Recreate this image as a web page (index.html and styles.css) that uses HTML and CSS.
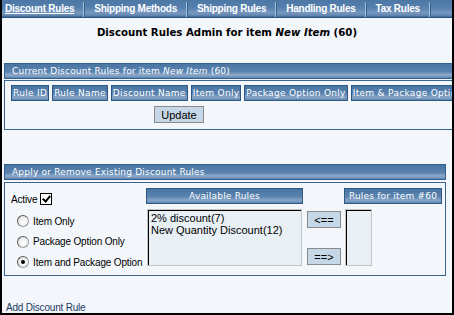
FILE: index.html
```html
<!DOCTYPE html>
<html lang="en">
<head>
    <meta charset="UTF-8">
    <title>Discount Rules Admin</title>
    <link rel="stylesheet" href="styles.css">
</head>
<body>
    <div class="window">
        <div class="tabs">
            <a class="tab first active">Discount Rules</a>
            <span class="tab-sep"></span>
            <a class="tab">Shipping Methods</a>
            <span class="tab-sep"></span>
            <a class="tab">Shipping Rules</a>
            <span class="tab-sep"></span>
            <a class="tab">Handling Rules</a>
            <span class="tab-sep"></span>
            <a class="tab">Tax Rules</a>
            <span class="tab-sep"></span>
        </div>

        <h1 class="page-title">Discount Rules Admin for item <em>New Item</em> (60)</h1>

        <!-- Regras atuais -->
        <div class="section wide">
            <div class="section-head">Current Discount Rules for item <em>New Item</em> (60)</div>
            <div class="section-body">
                <table class="rules">
                    <tr>
                        <th>Rule ID</th>
                        <th>Rule Name</th>
                        <th>Discount Name</th>
                        <th>Item Only</th>
                        <th>Package Option Only</th>
                        <th>Item &amp; Package Option</th>
                    </tr>
                </table>
                <button class="btn btn-update">Update</button>
            </div>
        </div>

        <!-- Aplicar / remover -->
        <div class="section">
            <div class="section-head">Apply or Remove Existing Discount Rules</div>
            <div class="section-body apply">
                <div class="options">
                    <label class="active-row">Active <input type="checkbox" class="chk" checked></label>
                    <label class="opt"><input type="radio" name="tipo" class="rad"> Item Only</label>
                    <label class="opt"><input type="radio" name="tipo" class="rad"> Package Option Only</label>
                    <label class="opt"><input type="radio" name="tipo" class="rad" checked> Item and Package Option</label>
                </div>
                <div class="col col-available">
                    <div class="col-head">Available Rules</div>
                    <div class="listbox">
                        <div>2% discount(7)</div>
                        <div>New Quantity Discount(12)</div>
                    </div>
                </div>
                <div class="move-btns">
                    <button class="btn btn-move">&lt;==</button>
                    <button class="btn btn-move">==&gt;</button>
                </div>
                <div class="col col-item">
                    <div class="col-head">Rules for item #60</div>
                    <div class="listbox"></div>
                </div>
            </div>
        </div>

        <a class="add-link">Add Discount Rule</a>
    </div>
</body>
</html>
```

FILE: styles.css
```css
body {
    margin: 0;
    background: #fff;
    font-family: 'DejaVu Sans', Verdana, sans-serif;
}
.window {
    width: 454px;
    height: 315px;
    box-sizing: border-box;
    border: 2px solid #000;
    border-top: none;
    background: #f3f7fb;
    overflow: hidden;
}
/* Abas */
.tabs {
    display: flex;
    align-items: stretch;
    height: 17px;
    border-bottom: 1px solid #2c5683;
    background: linear-gradient(to bottom, #4d78a6 0%, #5580ad 45%, #7797bf 75%, #6488b2 90%, #3a6591 100%);
}
.tab {
    display: flex;
    align-items: center;
    padding: 0 9px;
    color: #fff;
    font-family: 'Liberation Sans', Arial, sans-serif;
    font-weight: bold;
    font-size: 10px;
    letter-spacing: -0.25px;
    white-space: nowrap;
}
.tab.first { padding-left: 3px; }
.tab.active { text-decoration: underline; }
.tab-sep {
    width: 1px;
    margin-top: 2px;
    background: #a9c0da;
    border-right: 1px solid #34608d;
}
.page-title {
    margin: 8px 0 0 0;
    text-align: center;
    font-size: 10.2px;
    font-weight: bold;
    line-height: 14px;
    color: #000;
}
.page-title em { font-style: italic; }
/* Secoes */
.section {
    width: 442px;
    margin-left: 2px;
    margin-top: 23px;
}
.section.wide { width: 520px; }
.section + .section { margin-top: 34px; }
.section-head {
    height: 14px;
    line-height: 14px;
    padding-left: 7px;
    border: 1px solid #30608f;
    background: linear-gradient(to bottom, #4a76a4 0%, #5a83af 55%, #8fabcb 78%, #5e86b1 100%);
    color: #fff;
    font-size: 9px;
    letter-spacing: 0.2px;
    white-space: nowrap;
}
.section-body {
    margin-top: 1px;
    border: 1px solid #3a6490;
    padding: 4px 3px 6px 3px;
}
/* Tabela de regras */
.rules {
    border-spacing: 3px;
    margin: -3px 0 0 0;
}
.rules th {
    height: 16px;
    box-sizing: border-box;
    padding: 0 1px;
    border: 1px solid #2e5884;
    background: linear-gradient(to bottom, #4a76a4 0%, #5a83af 55%, #8aa7c8 80%, #5e86b1 100%);
    color: #fff;
    font-size: 9px;
    font-weight: normal;
    letter-spacing: 0.3px;
    white-space: nowrap;
}
.btn {
    background: #c6d7e7;
    border: 1px solid #8a8a8a;
    padding: 0;
    color: #000;
    font-family: 'Liberation Sans', Arial, sans-serif;
    font-size: 11px;
    cursor: pointer;
}
.btn-update {
    display: block;
    width: 50px;
    height: 17px;
    margin: 2px 0 0 146px;
}
/* Aplicar regras */
.apply {
    display: flex;
    align-items: flex-start;
    box-sizing: border-box;
    height: 94px;
    margin-top: 2px;
    padding: 5px 3px 0 1px;
}
.options {
    flex: 0 0 140px;
    display: flex;
    flex-direction: column;
    font-family: 'Liberation Sans', Arial, sans-serif;
    font-size: 10px;
    letter-spacing: -0.15px;
    white-space: nowrap;
}
.active-row {
    display: flex;
    align-items: flex-end;
    gap: 3px;
    padding: 5px 0 0 5px;
}
.opt {
    display: flex;
    align-items: center;
    gap: 4px;
    padding-left: 11px;
    height: 20.5px;
}
.active-row + .opt { margin-top: 6px; }
.chk, .rad {
    appearance: none;
    -webkit-appearance: none;
    flex-shrink: 0;
    margin: 0;
    width: 12px;
    height: 12px;
    box-sizing: border-box;
    position: relative;
}
.chk {
    border: 1px solid #000;
    background: #fff;
}
.chk:checked::after {
    content: '';
    position: absolute;
    left: 3px;
    top: 0px;
    width: 3px;
    height: 6px;
    border: solid #000;
    border-width: 0 2px 2px 0;
    transform: rotate(40deg);
}
.rad {
    border-radius: 50%;
    border: 1px solid #9a9a9a;
    border-top-color: #5a5a5a;
    border-left-color: #5a5a5a;
    background: radial-gradient(circle at 60% 60%, #fff 0%, #f0f0f0 50%, #cfcfcf 100%);
}
.rad:checked::after {
    content: '';
    position: absolute;
    left: 3px;
    top: 3px;
    width: 4px;
    height: 4px;
    border-radius: 50%;
    background: #000;
}
.col { display: flex; flex-direction: column; flex-shrink: 0; }
.col-available { width: 157px; }
.col-item { width: 98px; }
.col-head {
    height: 16px;
    box-sizing: border-box;
    line-height: 14px;
    border: 1px solid #2e5884;
    background: linear-gradient(to bottom, #4a76a4 0%, #5a83af 55%, #8aa7c8 80%, #5e86b1 100%);
    color: #fff;
    font-size: 9px;
    letter-spacing: 0.2px;
    text-align: center;
    white-space: nowrap;
    overflow: hidden;
}
.listbox {
    margin: 5px 0 0 1px;
    height: 57px;
    box-sizing: border-box;
    border: 1px solid #c4c4c4;
    box-shadow: inset 1px 1px 0 #000;
    background: #e9f0f5;
    padding: 2px 0 0 3px;
    font-family: 'Liberation Sans', Arial, sans-serif;
    font-size: 11px;
    line-height: 12px;
    color: #000;
}
.col-available .listbox { width: 155px; }
.col-item .listbox { width: 27px; }
.move-btns {
    display: flex;
    flex-direction: column;
    gap: 20px;
    padding-top: 23px;
    margin: 0 3px 0 4px;
}
.btn-move {
    width: 34px;
    height: 17px;
}
.add-link {
    display: block;
    margin: 26px 0 0 4px;
    color: #1b3762;
    font-family: 'Liberation Sans', Arial, sans-serif;
    font-size: 10px;
    letter-spacing: -0.2px;
}
```
